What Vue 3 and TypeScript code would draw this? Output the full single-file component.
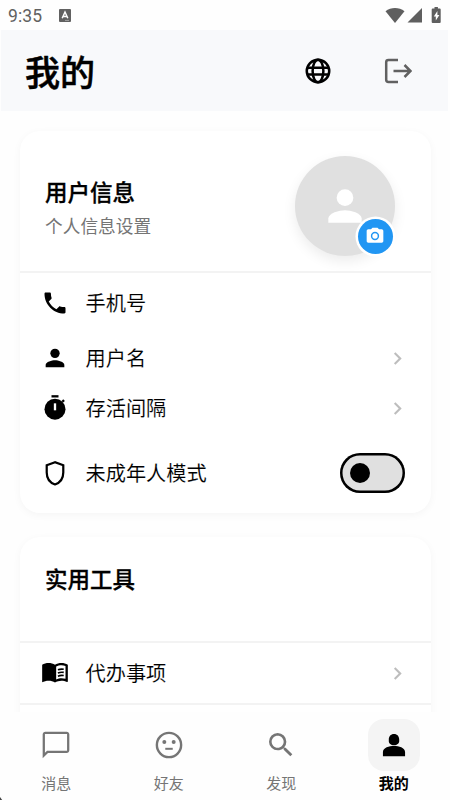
<script setup lang="ts">
import { ref } from 'vue'

interface NavItem {
  label: string
  icon: string
}

const navItems: NavItem[] = [
  { label: '消息', icon: 'M20 2H4c-1.100 0-2 .9-2 2v18l4-4h14c1.100 0 2-.9 2-2V4c0-1.100-.9-2-2-2zm.3 14.300H5.300L3.700 17.900V3.700H20.300z' },
  { label: '好友', icon: '' },
  { label: '发现', icon: 'M15.5 14h-.79l-.28-.27A6.471 6.471 0 0 0 16 9.500 6.500 6.500 0 1 0 9.500 16c1.610 0 3.090-.59 4.230-1.570l.27.28v.79l5 4.990L20.490 19l-4.990-5zm-6 0C7.010 14 5 11.990 5 9.500S7.010 5 9.500 5 14 7.010 14 9.500 11.990 14 9.500 14z' },
  { label: '我的', icon: 'M12 3.700c-2.500 0-3.900 1.800-3.900 4.200v1.200c0 1.500 1.600 3 3.900 3s3.900-1.500 3.900-3V7.900c0-2.400-1.400-4.200-3.900-4.200zM12 12.700c-3.600 0-8.300 1.200-8.300 4.600v3.200h16.600v-3.200c0-3.400-4.700-4.600-8.300-4.600z' },
]
const activeTab = ref('我的')
const minorMode = ref(false)
</script>

<template>
  <div class="screen">
    <div class="status">
      <span class="time">9:35</span>
      <svg class="app-badge" viewBox="0 0 12 13">
        <path fill="#616161" d="M1 0h10q1 0 1 1v11q0 1-1 1H1q-1 0-1-1V1q0-1 1-1z" />
        <path d="M3.200 9.300 6 3l2.800 6.300M4.200 7.400h3.600" fill="none" stroke="#fff" stroke-width="1.500" />
        <path d="M6 11.400h4" stroke="#ccc" stroke-width=".6" />
      </svg>
      <svg class="signals" viewBox="0 0 58 17" fill="#5f5f5f">
        <path d="M.5 4.200C6-.2 14-.2 19.500 4.200L10 16z" />
        <path d="M37 1v14.500H22.500z" />
        <path d="M49.500 0v1.600h-1.800q-1 0-1 1V15q0 1 1 1h7q1 0 1-1V2.600q0-1-1-1h-1.800V0z" />
        <path d="M52.400 4 48.800 9.600h2v4l3.600-5.600h-2z" fill="#fff" />
      </svg>
    </div>

    <header class="header">
      <h1>我的</h1>
      <div class="actions">
        <button class="action">
          <svg class="globe" viewBox="0 0 24 24" fill="none" stroke="#000" stroke-width="2">
            <circle cx="12" cy="12" r="9" />
            <ellipse cx="12" cy="12" rx="4.300" ry="9" />
            <path d="M3.500 9.300h17M3.500 14.700h17" />
          </svg>
        </button>
        <button class="action">
          <svg class="logout" viewBox="0 0 28 26" fill="none" stroke="#616161" stroke-width="2.500">
            <path d="M14 2H4.500Q2.200 2 2.200 4.200v17.600Q2.200 24 4.500 24H14M9.500 13H26.500M20.500 7l6 6-6 6" />
          </svg>
        </button>
      </div>
    </header>

    <main class="content">
      <section class="card">
        <div class="profile">
          <div>
            <h2>用户信息</h2>
            <p>个人信息设置</p>
          </div>
          <div class="avatar">
            <svg viewBox="0 0 24 24" fill="#fff">
              <circle cx="12" cy="8" r="4" />
              <path d="M12 14c-2.670 0-8 1.340-8 4v2h16v-2c0-2.660-5.330-4-8-4z" />
            </svg>
            <span class="camera">
              <svg viewBox="0 0 24 24" fill="#fff">
                <path fill-rule="evenodd" d="M9 2 7.170 4H4c-1.100 0-2 .9-2 2v12c0 1.100.9 2 2 2h16c1.100 0 2-.9 2-2V6c0-1.100-.9-2-2-2h-3.170L15 2zm3 15a5 5 0 1 1 0-10 5 5 0 0 1 0 10z" />
                <circle cx="12" cy="12" r="3.200" />
              </svg>
            </span>
          </div>
        </div>

        <div class="row phone">
          <svg class="icon" viewBox="0 0 24 24"><path d="M6.620 10.790c1.440 2.830 3.760 5.140 6.590 6.590l2.200-2.200c.27-.27.67-.36 1.020-.24 1.120.37 2.330.57 3.570.57.55 0 1 .45 1 1V20c0 .55-.45 1-1 1-9.390 0-17-7.610-17-17 0-.55.45-1 1-1h3.500c.55 0 1 .45 1 1 0 1.250.2 2.450.57 3.570.11.35.03.74-.25 1.020z" /></svg>
          <span>手机号</span>
        </div>
        <div class="row">
          <svg class="icon" viewBox="0 0 24 24"><circle cx="12" cy="8" r="4" /><path d="M12 14c-2.670 0-8 1.340-8 4v2h16v-2c0-2.660-5.330-4-8-4z" /></svg>
          <span>用户名</span>
          <svg class="chevron" viewBox="0 0 24 24"><path d="M8.590 16.590 13.170 12 8.590 7.410 10 6l6 6-6 6z" /></svg>
        </div>
        <div class="row">
          <svg class="icon" viewBox="0 0 24 24"><path d="M15 1H9v2h6z" /><path d="m17.610 5.970 1.420 1.420 1.420-1.420-1.410-1.410z" /><circle cx="12" cy="13" r="9" /><path d="M11 8h2v6h-2z" fill="#fff" /></svg>
          <span>存活间隔</span>
          <svg class="chevron" viewBox="0 0 24 24"><path d="M8.590 16.590 13.170 12 8.590 7.410 10 6l6 6-6 6z" /></svg>
        </div>
        <div class="row minor">
          <svg class="icon shield" viewBox="0 0 24 24"><path d="M12 2.800 4.900 5.400v6.100c0 4.900 2.600 8.700 7.100 10.300 4.500-1.600 7.100-5.400 7.100-10.300V5.400z" /></svg>
          <span>未成年人模式</span>
          <button class="toggle" :class="{ on: minorMode }" @click="minorMode = !minorMode"><i></i></button>
        </div>
      </section>

      <section class="card tools">
        <div class="tools-head"><h2>实用工具</h2></div>
        <div class="row todo">
          <svg class="icon book" viewBox="0 0 24 24">
            <path fill-rule="evenodd" d="M12 5c-1.450-1.100-3.550-1.500-5.500-1.500S2.450 3.900 1 5v15c1.450-1 3.550-1.400 5.500-1.400S10.550 19 12 20.100c1.350-.85 3.800-1.500 5.500-1.500 1.650 0 3.350.3 4.750 1.050.4.200.75-.1.750-.4V5c-1.500-1.100-3.550-1.500-5.500-1.500S13.450 3.900 12 5zm9 12c-1.100-.35-2.300-.5-3.500-.5-1.400 0-3 .45-4.500 1.100V6.500c1.350-.7 3.100-1.100 4.500-1.100 1.200 0 2.400.15 3.500.5z" />
            <path d="M14.500 9.300c1.700-.7 3.400-.8 5-.5m-5 3.200c1.700-.7 3.400-.8 5-.5m-5 3.200c1.700-.7 3.400-.8 5-.5" fill="none" stroke="#000" stroke-width="1.400" />
          </svg>
          <span>代办事项</span>
          <svg class="chevron" viewBox="0 0 24 24"><path d="M8.590 16.590 13.170 12 8.590 7.410 10 6l6 6-6 6z" /></svg>
        </div>
        <div class="row todo"></div>
      </section>
    </main>

    <nav class="nav">
      <button
        v-for="item in navItems"
        :key="item.label"
        class="tab"
        :class="{ active: item.label === activeTab }"
        @click="activeTab = item.label"
      >
        <span class="tab-icon">
          <svg v-if="item.icon" viewBox="0 0 24 24" fill="currentColor"><path fill-rule="evenodd" :d="item.icon" /></svg>
          <svg v-else viewBox="0 0 24 24" fill="currentColor">
            <circle cx="12" cy="12" r="9.100" fill="none" stroke="currentColor" stroke-width="1.800" />
            <circle cx="8.500" cy="9.800" r="1.500" /><circle cx="15.500" cy="9.800" r="1.500" />
            <path d="M9.200 14.100h5.600v1.500H9.200z" />
          </svg>
        </span>
        <span class="label">{{ item.label }}</span>
      </button>
      <svg class="corner" viewBox="0 0 3 3"><path d="M0 0 2.200 3H0z" fill="#444" /></svg>
    </nav>
  </div>
</template>

<style>
body {
  background: #fff;
  overflow: hidden;
}
</style>

<style scoped>
* {
  box-sizing: border-box;
}
h1,
h2,
p {
  margin: 0;
}
svg {
  display: block;
  flex: none;
}
button {
  border: 0;
  padding: 0;
  background: none;
  font: inherit;
  color: inherit;
}
.screen {
  width: 450px;
  height: 800px;
  display: flex;
  flex-direction: column;
  overflow: hidden;
  background: #fefefe;
  color: #000;
  font-family: Roboto, 'Noto Sans CJK SC', sans-serif;
}
.status {
  height: 30px;
  flex: none;
  display: flex;
  align-items: center;
  padding: 0 8px;
}
.time {
  width: 51px;
  font-size: 17.500px;
  line-height: 30px;
  color: #616161;
  padding-top: 1px;
  letter-spacing: 0.1px;
}
.app-badge {
  width: 12px;
  height: 13px;
}
.signals {
  width: 58px;
  height: 17px;
  margin-left: auto;
  margin-right: -1px;
}
.header {
  height: 81px;
  flex: none;
  margin: 0 2px 0 1px;
  padding: 0 26px 0 24px;
  display: flex;
  align-items: center;
  justify-content: space-between;
  background: #f8f9fb;
}
h1 {
  font-size: 35px;
  line-height: 50px;
  padding-top: 8px;
  font-weight: 500;
  -webkit-text-stroke: 0.500px #000;
}
.actions {
  display: flex;
  gap: 32.500px;
}
.action {
  width: 48px;
  height: 48px;
  display: grid;
  place-items: center;
}
.globe {
  width: 30px;
  height: 30px;
}
.logout {
  width: 28px;
  height: 26px;
}
.content {
  flex: 1;
  min-height: 0;
  overflow: hidden;
  padding: 20px 19px 0 20px;
}
.card {
  border-radius: 20px;
  background: #fff;
  box-shadow: 0 2px 8px rgba(0, 0, 0, 0.040);
}
.card:first-child {
  height: 382px;
}
.profile {
  height: 142px;
  padding: 25px 36px 0 25px;
  display: flex;
  justify-content: space-between;
  align-items: flex-start;
  border-bottom: 2px solid #f3f3f3;
}
.profile > div:first-child {
  padding-top: 20px;
}
h2 {
  font-size: 22.500px;
  line-height: 34px;
  font-weight: 500;
  -webkit-text-stroke: 0.300px #000;
}
p {
  font-size: 17.700px;
  line-height: 26px;
  margin-top: 4px;
  color: #757575;
}
.avatar {
  position: relative;
  width: 100px;
  height: 100px;
  border-radius: 50%;
  background: #e0e0e0;
  display: grid;
  place-items: center;
  box-shadow: 0 5px 13px rgba(0, 0, 0, 0.080);
}
.avatar > svg {
  width: 50px;
  height: 50px;
}
.camera {
  position: absolute;
  right: 2.500px;
  bottom: 2.500px;
  width: 35px;
  height: 35px;
  box-shadow: 0 0 0 2.500px #fff;
  border-radius: 50%;
  background: #2196f3;
  display: grid;
  place-items: center;
}
.camera svg {
  width: 20px;
  height: 20px;
}
.row {
  height: 50px;
  display: flex;
  align-items: center;
  padding: 0 26px 0 21px;
  font-size: 20.200px;
}
.row span {
  flex: 1;
  margin-left: 16.500px;
  line-height: 30px;
  padding-top: 2px;
  -webkit-text-stroke: 0.100px #fff;
}
.phone {
  height: 60px;
}
.minor {
  height: 79px;
}
.icon {
  width: 28px;
  height: 28px;
}
.shield {
  fill: none;
  stroke: #000;
  stroke-width: 1.900;
}
.chevron {
  width: 25px;
  height: 25px;
  margin-right: -5px;
  fill: #bdbdbd;
}
.toggle {
  width: 65px;
  height: 40px;
  box-shadow: inset 0 0 0 2.500px #000;
  border-radius: 20px;
  background: #e0e0e0;
  padding: 0 10px;
  display: flex;
  align-items: center;
}
.toggle.on {
  justify-content: flex-end;
}
.toggle i {
  width: 20px;
  height: 20px;
  border-radius: 50%;
  background: #000;
}
.tools {
  margin-top: 24px;
}
.tools-head {
  height: 106px;
  padding: 26px 25px 0;
  border-bottom: 2px solid #f3f3f3;
}
.todo {
  height: 62px;
  border-bottom: 2px solid #f3f3f3;
}
.nav {
  position: relative;
  height: 88px;
  flex: none;
  display: flex;
  background: #fefefe;
}
.tab {
  flex: 1;
  display: flex;
  flex-direction: column;
  align-items: center;
  padding-top: 7px;
  color: #757575;
}
.tab-icon {
  width: 52px;
  height: 52px;
  border-radius: 16px;
  display: grid;
  place-items: center;
}
.tab-icon svg {
  width: 32px;
  height: 32px;
}
.label {
  font-size: 15px;
  line-height: 22px;
  margin-top: 1.500px;
}
.active {
  color: #000;
}
.active .tab-icon {
  background: #f4f4f4;
}
.active .label {
  font-weight: 700;
}
.corner {
  position: absolute;
  left: 0;
  bottom: 0;
  width: 3px;
  height: 3px;
}
</style>
